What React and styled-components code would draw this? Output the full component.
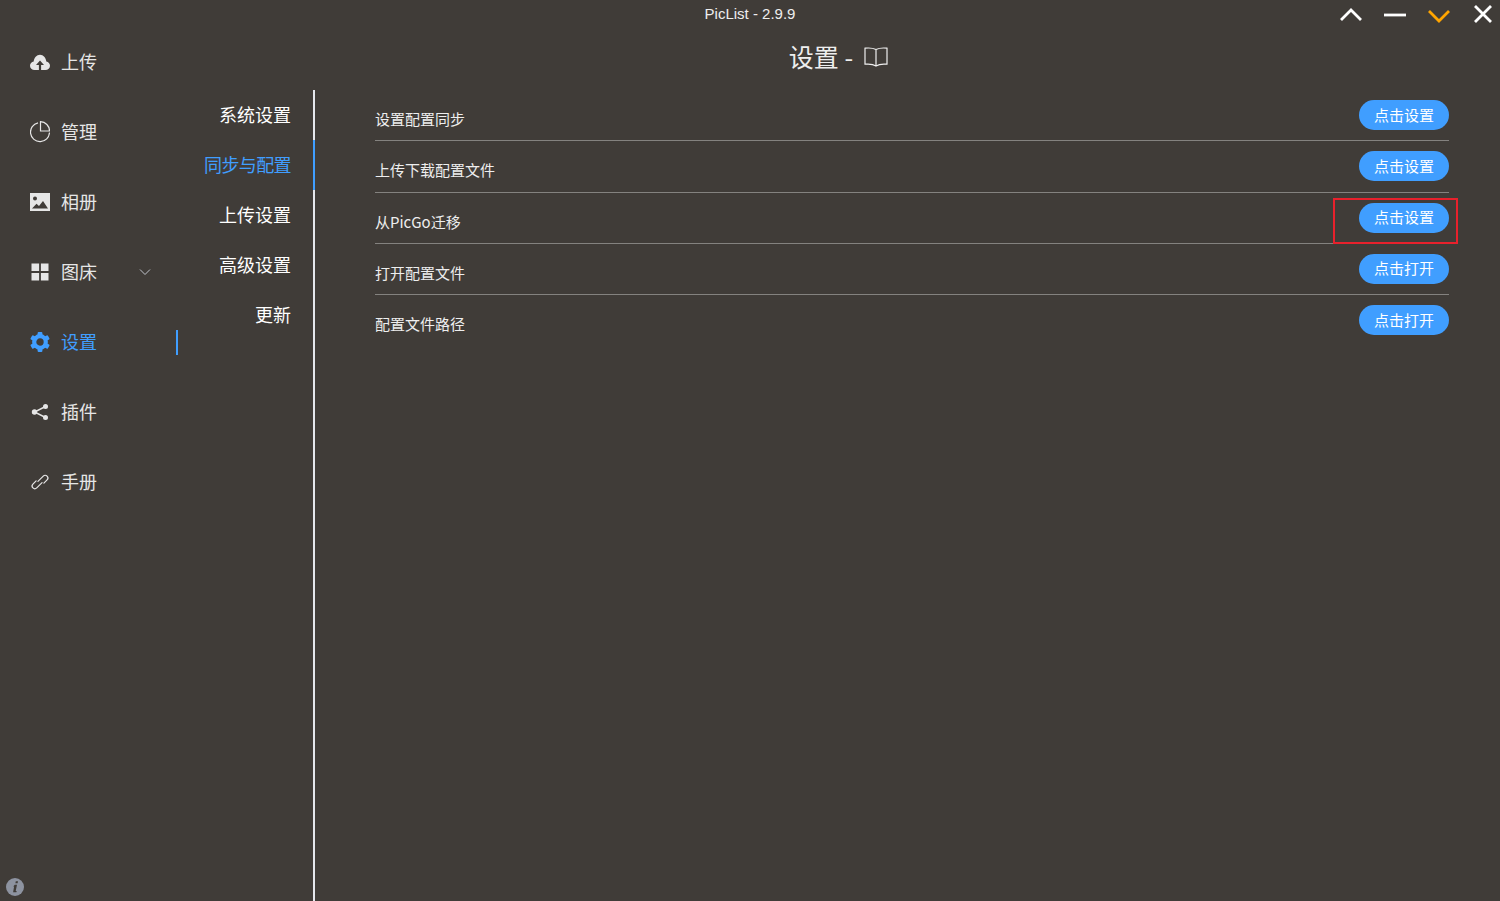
import React from 'react';
import styled, { createGlobalStyle } from 'styled-components';

const BG = '#403c38';
const BLUE = '#409eff';

const GlobalStyle = createGlobalStyle`
  html, body {
    margin: 0;
    height: 100%;
    background: ${BG};
    overflow: hidden;
  }
  * {
    box-sizing: border-box;
  }
  body {
    font-family: "Noto Sans CJK SC", "Liberation Sans", sans-serif;
  }
`;

const menuItems = [
  { label: '上传', icon: 'upload' },
  { label: '管理', icon: 'pie' },
  { label: '相册', icon: 'picture' },
  { label: '图床', icon: 'menu', arrow: true },
  { label: '设置', icon: 'gear', active: true },
  { label: '插件', icon: 'share' },
  { label: '手册', icon: 'link' },
];

const tabs = [
  { label: '系统设置' },
  { label: '同步与配置', active: true },
  { label: '上传设置' },
  { label: '高级设置' },
  { label: '更新' },
];

const rows = [
  { label: '设置配置同步', action: '点击设置' },
  { label: '上传下载配置文件', action: '点击设置' },
  { label: '从PicGo迁移', action: '点击设置', marked: true },
  { label: '打开配置文件', action: '点击打开' },
  { label: '配置文件路径', action: '点击打开', last: true },
];

const gearTeeth = [0, 60, 120, 180, 240, 300];

const MenuIcon = ({ name }) => {
  switch (name) {
    case 'upload':
      return (
        <svg width="20" height="20" viewBox="0 0 20 20">
          <path fill="currentColor" d="M4.600 18C2 18 0 16.200 0 13.800c0-2.200 1.500-3.900 3.700-4.200C4 6 6.700 2.800 10 2.800s6 3.200 6.300 6.800c2.200.3 3.700 2 3.700 4.200 0 2.400-2 4.200-4.600 4.200z" />
          <path fill={BG} d="M10 8.600l4 4.400h-2.900v5H8.900v-5H6z" />
        </svg>
      );
    case 'pie':
      return (
        <svg width="20" height="22" viewBox="0 0 20 22" fill="none" stroke="currentColor" strokeWidth="1.200">
          <path d="M8 1.800A9.500 9.500 0 1 0 19.500 11.500" />
          <path d="M10.500.7V10h9A9.300 9.300 0 0 0 10.500.7z" />
        </svg>
      );
    case 'picture':
      return (
        <svg width="20" height="18" viewBox="0 0 20 18">
          <path fill="currentColor" fillRule="evenodd" d="M0 0h20v18H0zM7 5.500a2 2 0 1 1-4 0 2 2 0 0 1 4 0zM2 15.500l4.500-4.700 2.500 2.200 4-5 5 7.500z" />
        </svg>
      );
    case 'menu':
      return (
        <svg width="20" height="20" viewBox="0 0 20 20">
          <path fill="currentColor" d="M1.500 1.500h7.600v7.600H1.500zM10.900 1.500h7.600v7.600h-7.600zM1.500 10.900h7.600v7.600H1.500zM10.900 10.900h7.600v7.600h-7.600z" />
        </svg>
      );
    case 'gear':
      return (
        <svg width="20" height="20" viewBox="0 0 20 20">
          <circle cx="10" cy="10" r="5.800" fill="none" stroke="currentColor" strokeWidth="4.200" />
          {gearTeeth.map((deg) => (
            <rect key={deg} x="7.600" y="0" width="4.800" height="4" rx="1" fill="currentColor" transform={`rotate(${deg} 10 10)`} />
          ))}
        </svg>
      );
    case 'share':
      return (
        <svg width="20" height="20" viewBox="0 0 20 20">
          <path fill="none" stroke="currentColor" strokeWidth="1.400" d="M15.500 4.500 4.500 10l11 5.500" />
          <circle cx="15.500" cy="4.500" r="2.500" fill="currentColor" />
          <circle cx="4.500" cy="10" r="2.700" fill="currentColor" />
          <circle cx="15.500" cy="15.500" r="2.500" fill="currentColor" />
        </svg>
      );
    case 'link':
      return (
        <svg width="20" height="20" viewBox="0 0 20 20" fill="none" stroke="currentColor" strokeWidth="1.200" strokeLinecap="round">
          <g transform="rotate(-45 10 10)">
            <path d="M8 6.500H3.500a2.700 2.700 0 0 0 0 5.400H11" />
            <path d="M12 13.500h4.500a2.700 2.700 0 0 0 0-5.400H9" />
          </g>
        </svg>
      );
    default:
      return null;
  }
};

const App = () => {
  return (
    <>
      <GlobalStyle />
      <Page>
        <TitleBar>
          PicList - 2.9.9
          <WindowControls>
            <WindowIcon viewBox="0 0 24 24"><path d="M2 17 12 7l10 10" /></WindowIcon>
            <WindowIcon viewBox="0 0 24 24"><path d="M1 12h22" /></WindowIcon>
            <WindowIcon viewBox="0 0 24 24" $accent><path d="M2 8l10 10L22 8" /></WindowIcon>
            <WindowIcon viewBox="0 0 24 24"><path d="M4 3l16 16M20 3 4 19" /></WindowIcon>
          </WindowControls>
        </TitleBar>
        <Body>
          <Sidebar>
            {menuItems.map((item) => (
              <MenuItem key={item.label} $active={item.active}>
                <IconSlot><MenuIcon name={item.icon} /></IconSlot>
                <MenuLabel>{item.label}</MenuLabel>
                {item.arrow && (
                  <Arrow viewBox="0 0 12 8"><path d="M1 1.500 6 6.500l5-5" /></Arrow>
                )}
              </MenuItem>
            ))}
            <InfoBadge>
              <svg width="18" height="18" viewBox="0 0 18 18">
                <circle cx="9" cy="9" r="9" fill="#8d93a0" />
                <path fill={BG} d="M9.800 3.200h2.200l-.4 2.100H9.400zM8.800 6.800h2.200l-1.300 6.100h1l-.3 1.400H7.100l1-5.900h-.9z" />
              </svg>
            </InfoBadge>
          </Sidebar>
          <Content>
            <PageTitle>
              设置 -
              <BookIcon viewBox="0 0 24 20">
                <path d="M12 2.500C9 1 5 .8 1 1.200v16C5 16.800 9 17 12 19c3-2 7-2.200 11-1.800v-16C19 .8 15 1 12 2.500zM12 2.500V19" />
              </BookIcon>
            </PageTitle>
            <Panels>
              <Tabs>
                {tabs.map((tab) => (
                  <Tab key={tab.label} $active={tab.active}>{tab.label}</Tab>
                ))}
              </Tabs>
              <Form>
                {rows.map((row) => (
                  <Row key={row.label} $last={row.last}>
                    <RowLabel>{row.label}</RowLabel>
                    <PillButton>{row.action}</PillButton>
                    {row.marked && <RedMark />}
                  </Row>
                ))}
              </Form>
            </Panels>
          </Content>
        </Body>
      </Page>
    </>
  );
};

const Page = styled.div`
  display: flex;
  flex-direction: column;
  height: 100vh;
  background: ${BG};
  color: #eee;
`;

const TitleBar = styled.div`
  position: relative;
  flex: none;
  height: 28px;
  line-height: 28px;
  text-align: center;
  font-family: "Liberation Sans", sans-serif;
  font-size: 15px;
  color: #eee;
`;

const WindowControls = styled.div`
  position: absolute;
  top: 3px;
  right: 5px;
  display: flex;
  gap: 20px;
`;

const WindowIcon = styled.svg`
  width: 24px;
  height: 24px;
  fill: none;
  stroke: ${(p) => (p.$accent ? '#ffa500' : '#fff')};
  stroke-width: 2.800;
`;

const Body = styled.div`
  display: flex;
  flex: 1;
  min-height: 0;
`;

const Sidebar = styled.nav`
  position: relative;
  flex: none;
  width: 177px;
  padding-top: 9px;
  display: flex;
  flex-direction: column;
  gap: 20px;
`;

const MenuItem = styled.div`
  position: relative;
  display: flex;
  align-items: center;
  height: 50px;
  padding-left: 30px;
  font-size: 18px;
  color: ${(p) => (p.$active ? BLUE : '#e6e6e6')};

  ${(p) => p.$active && `
    &::after {
      content: '';
      position: absolute;
      right: -1px;
      top: 13px;
      width: 2px;
      height: 25px;
      background: ${BLUE};
    }
  `}
`;

const IconSlot = styled.span`
  display: flex;
  width: 20px;
  margin-right: 11px;
`;

const MenuLabel = styled.span`
  margin-top: -2px;
`;

const Arrow = styled.svg`
  width: 12px;
  height: 8px;
  margin-left: 42px;
  fill: none;
  stroke: #c0c4cc;
  stroke-width: 1;
`;

const InfoBadge = styled.div`
  position: absolute;
  left: 6px;
  bottom: 5px;
  display: flex;
`;

const Content = styled.main`
  flex: 1;
  display: flex;
  flex-direction: column;
  min-width: 0;
`;

const PageTitle = styled.div`
  flex: none;
  height: 62px;
  padding-top: 10px;
  display: flex;
  justify-content: center;
  align-items: flex-start;
  gap: 11px;
  font-size: 25px;
  line-height: 36px;
  color: #eee;
`;

const BookIcon = styled.svg`
  width: 24px;
  height: 20px;
  margin-top: 9px;
  fill: none;
  stroke: #eee;
  stroke-width: 1.200;
`;

const Panels = styled.div`
  flex: 1;
  display: flex;
  min-height: 0;
`;

const Tabs = styled.div`
  flex: none;
  width: 138px;
  border-right: 2px solid #e4e7ed;
`;

const Tab = styled.div`
  height: 50px;
  line-height: 48px;
  margin-right: -2px;
  padding-right: 22px;
  text-align: right;
  font-size: 18px;
  white-space: nowrap;
  letter-spacing: ${(p) => (p.$active ? '-0.6px' : '0')};
  color: ${(p) => (p.$active ? BLUE : '#fff')};
  border-right: 2px solid ${(p) => (p.$active ? BLUE : 'transparent')};
`;

const Form = styled.div`
  flex: 1;
  padding: 0 51px 0 60px;
`;

const Row = styled.div`
  position: relative;
  display: flex;
  justify-content: space-between;
  align-items: flex-start;
  height: 51.250px;
  padding-top: 10px;
  border-bottom: 1px solid ${(p) => (p.$last ? 'transparent' : '#84827f')};
`;

const RowLabel = styled.span`
  margin-top: 4px;
  font-size: 15px;
  line-height: 30px;
  color: #eee;
`;

const PillButton = styled.button`
  width: 90px;
  height: 30px;
  padding: 0 0 2px;
  border: none;
  border-radius: 15px;
  background: ${BLUE};
  color: #fff;
  font-family: inherit;
  font-size: 15px;
`;

const RedMark = styled.div`
  position: absolute;
  top: 5px;
  right: -9px;
  width: 125px;
  height: 46px;
  border: 2px solid #e8212c;
`;

export default App;
